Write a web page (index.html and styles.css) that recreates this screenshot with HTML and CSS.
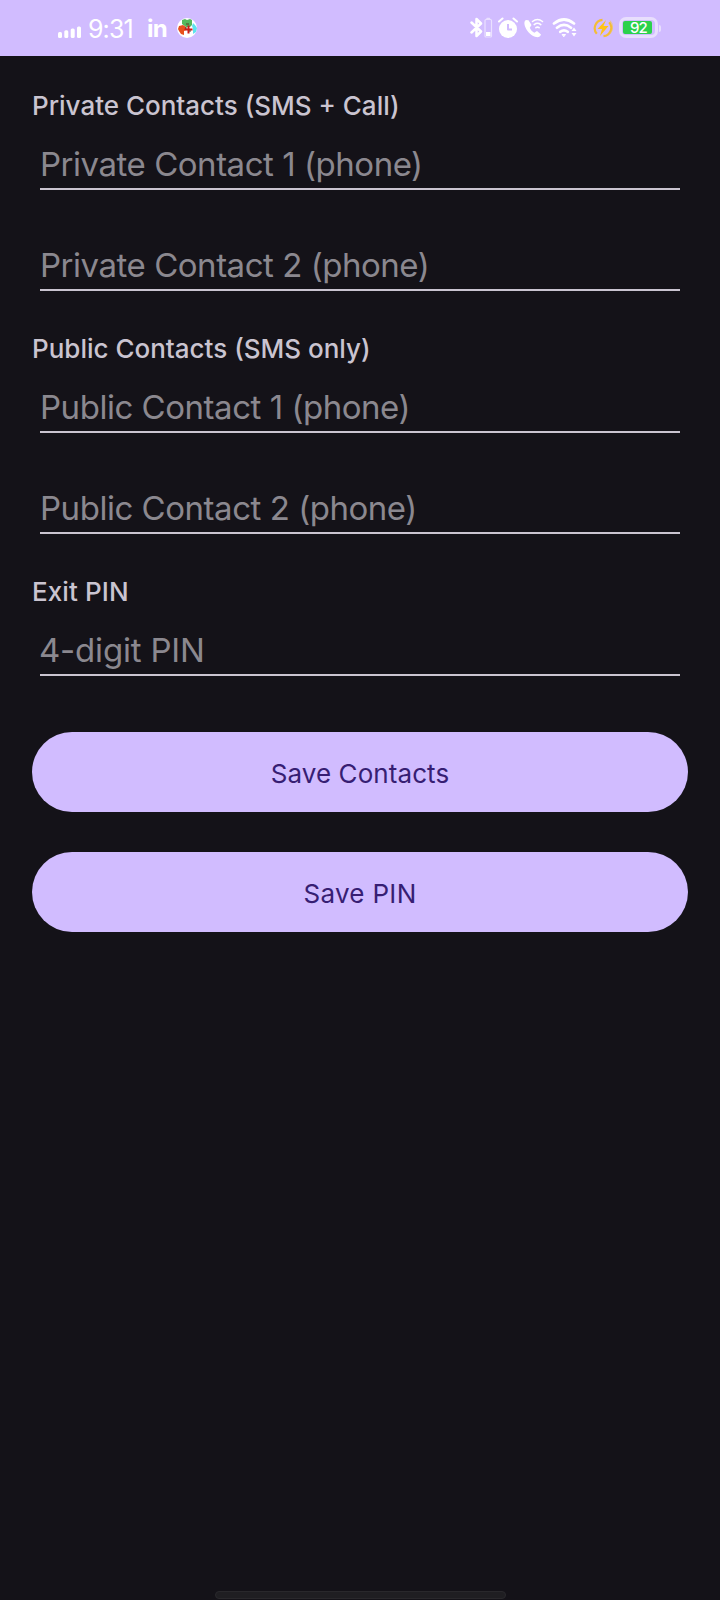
FILE: index.html
```html
<!DOCTYPE html>
<html lang="en">
<head>
<meta charset="utf-8">
<title>Contacts</title>
<link rel="stylesheet" href="styles.css">
</head>
<body>
<header class="status">
  <div class="status-left">
    <svg class="signal" width="24" height="12" viewBox="0 0 24 12" fill="#fff"><rect x="0" y="6" width="4" height="6" rx="1.5"/><rect x="6.3" y="4.3" width="4" height="7.7" rx="1.5"/><rect x="12.7" y="2.5" width="4" height="9.5" rx="1.5"/><rect x="19" y="0.5" width="4" height="11.5" rx="1.5"/></svg>
    <span class="clock">9:31</span>
    <span class="linked">in</span>
    <svg class="app" width="20" height="20" viewBox="0 0 20 20"><circle cx="10" cy="10" r="10" fill="#fff"/><path d="M5 2l3-1 2 1 3-1 2 1v5l-2 2H9L5 6z" fill="#55b95c"/><path d="M2 8l4-1 3 2v3l-2 1v4l-3-1-2-3-1-2z" fill="#e8501c"/><path d="M16 5l2 2 2 3-1 4-3 2v-5l-1-3z" fill="#5ee3ee"/><path d="M10.500 7.500h2v3h3v2h-3v3h-2v-3H7.500v-2h3z" fill="#cf1b18"/><path d="M9 6h3M8 10h2M12 13h2" stroke="#593c25"/></svg>
  </div>
  <div class="status-right">
    <svg width="110" height="24" viewBox="0 0 110 24" fill="none" stroke="#fff" stroke-linecap="round" stroke-linejoin="round">
      <path d="M1.5 6.5L11 15.5 6.5 20V3L11 7.5 1.5 16.5" stroke-width="2.5"/>
      <g opacity=".55"><rect x="15" y="3.5" width="6.5" height="17.5" rx="1" stroke-width="1.2"/><path d="M17 2.5h2.5" stroke-width="1.5"/></g>
      <rect x="16" y="16" width="4.5" height="4" fill="#fff" stroke="none"/>
      <circle cx="38" cy="13" r="9" fill="#fff" stroke="none"/>
      <path d="M29 5.5L32.5 2.5M47 5.5L43.5 2.5" stroke-width="2"/>
      <path d="M38 8v5.500h4" stroke="#d1bcff" stroke-width="2" stroke-linecap="butt"/>
      <path d="M56 4c-2 1-2 4-.5 7.500 2 4.500 6 8.500 10.500 9.500 2.500.5 4.500-.5 5-2.500l-4-3.500-2.700 1.700c-2-1-3.700-3-4.500-5L61.500 9 58.500 4.200z" fill="#fff" stroke="none"/>
      <path d="M62.500 5.500q5-4 10 0M64.200 8.600q3.300-2.600 6.600 0M65.900 11.700q1.600-1.200 3.200 0" stroke-width="1.600"/>
      <path d="M84 7.500q10-8 20 0M87 11.700q7-5.500 14 0M90.300 15.800q3.700-3 7.400 0" stroke-width="2.700"/>
      <path d="M92.500 18.500h3l-1.500 2z" fill="#fff" stroke-width="1"/>
      <path d="M104 11.500l2.500 3.500h-5zM104 20.500l2.500-3.500h-5z" fill="#fff" stroke="none"/>
    </svg>
    <svg class="charge" width="20" height="20" viewBox="0 0 20 20"><path d="M9.500 1.800A8.500 8.500 0 003.800 15.800M10.500 18.200A8.500 8.500 0 0016.200 4.200" fill="none" stroke="#f3bd37" stroke-width="2.200"/><path d="M13 2L4.500 11h4.500L7 18l8.500-10h-5z" fill="#ffc414"/><path d="M17 2.500A10 10 0 0117 16" fill="none" stroke="#f4c45b" stroke-width="1" opacity=".7"/></svg>
    <div class="battery"><span class="battery-level">92</span></div>
    <i class="battery-tip"></i>
  </div>
</header>
<main class="form">
  <section class="group">
    <h2 class="label">Private Contacts (SMS + Call)</h2>
    <div class="field"><span class="hint">Private Contact 1 (phone)</span></div>
    <div class="field"><span class="hint">Private Contact 2 (phone)</span></div>
  </section>
  <section class="group">
    <h2 class="label">Public Contacts (SMS only)</h2>
    <div class="field"><span class="hint">Public Contact 1 (phone)</span></div>
    <div class="field"><span class="hint">Public Contact 2 (phone)</span></div>
  </section>
  <section class="group pin">
    <h2 class="label exit">Exit PIN</h2>
    <div class="field"><span class="hint digits">4-digit PIN</span></div>
  </section>
  <div class="actions">
    <button class="button save-contacts">Save Contacts</button>
    <button class="button">Save PIN</button>
  </div>
</main>
<footer class="nav"><i class="handle"></i></footer>
</body>
</html>
```
FILE: styles.css
```css
* { box-sizing: border-box; }
body {
  margin: 0;
  height: 1600px;
  display: flex;
  flex-direction: column;
  overflow: hidden;
  background: #141218;
  font-family: Inter, "Liberation Sans", sans-serif;
}
svg { display: block; flex: none; }
.status {
  height: 56px;
  flex: none;
  display: flex;
  justify-content: space-between;
  padding: 0 59px 0 58px;
  background: #d1bcff;
  color: #fff;
}
.status-left, .status-right { display: flex; align-items: center; height: 56px; }
.signal { margin-top: 8px; }
.clock { width: 52px; margin-left: 6px; padding-top: 2px; font-size: 25px; letter-spacing: -.9px; line-height: 30px; }
.linked { width: 20px; margin-left: 7px; padding-top: 2px; font-size: 24px; font-weight: 700; letter-spacing: -.8px; line-height: 30px; }
.app { margin-left: 10px; }
.charge { margin-left: 13px; }
.battery {
  width: 39px;
  height: 21px;
  margin-left: 6px;
  margin-top: -1px;
  padding: 1px;
  border: 3px solid #e8defd;
  border-radius: 7px;
}
.battery-level {
  display: block;
  width: 29px;
  height: 13px;
  padding-left: 2px;
  border-radius: 2px;
  background: #2bd14b;
  font-size: 15px;
  font-weight: 500;
  letter-spacing: -.8px;
  line-height: 13px;
  text-align: center;
}
.battery-tip { width: 2px; height: 7px; margin-left: 1px; border-radius: 0 3px 3px 0; background: #e8defd; }
.form { flex: 1; padding: 32px 32px 0; }
.group { height: 243px; }
.label {
  margin: 0;
  height: 36px;
  color: #cac4d0;
  font-size: 26px;
  font-weight: 500;
  line-height: 36px;
  white-space: nowrap;
}
.exit { letter-spacing: .1px; }
.field {
  height: 66px;
  margin: 0 8px 35px;
  padding-top: 20px;
  border-bottom: 2px solid #cac4d0;
}
.hint {
  display: block;
  color: #8b888f;
  font-size: 33px;
  line-height: 40px;
  letter-spacing: -.47px;
  white-space: nowrap;
}
.digits { margin-left: -1px; letter-spacing: -.2px; }
.pin { height: 158px; }
.actions { display: flex; flex-direction: column; gap: 40px; }
.button {
  height: 80px;
  padding: 4px 0 0;
  border: 0;
  border-radius: 40px;
  background: #d1bcff;
  color: #371e73;
  font: 400 26px/36px Inter, "Liberation Sans", sans-serif;
  letter-spacing: .3px;
}
.save-contacts { letter-spacing: .08px; }
.nav { height: 9px; flex: none; display: flex; justify-content: center; }
.handle { width: 291px; height: 8px; border: 1px solid #29282c; border-radius: 4px; background: #1f1e22; }
```
